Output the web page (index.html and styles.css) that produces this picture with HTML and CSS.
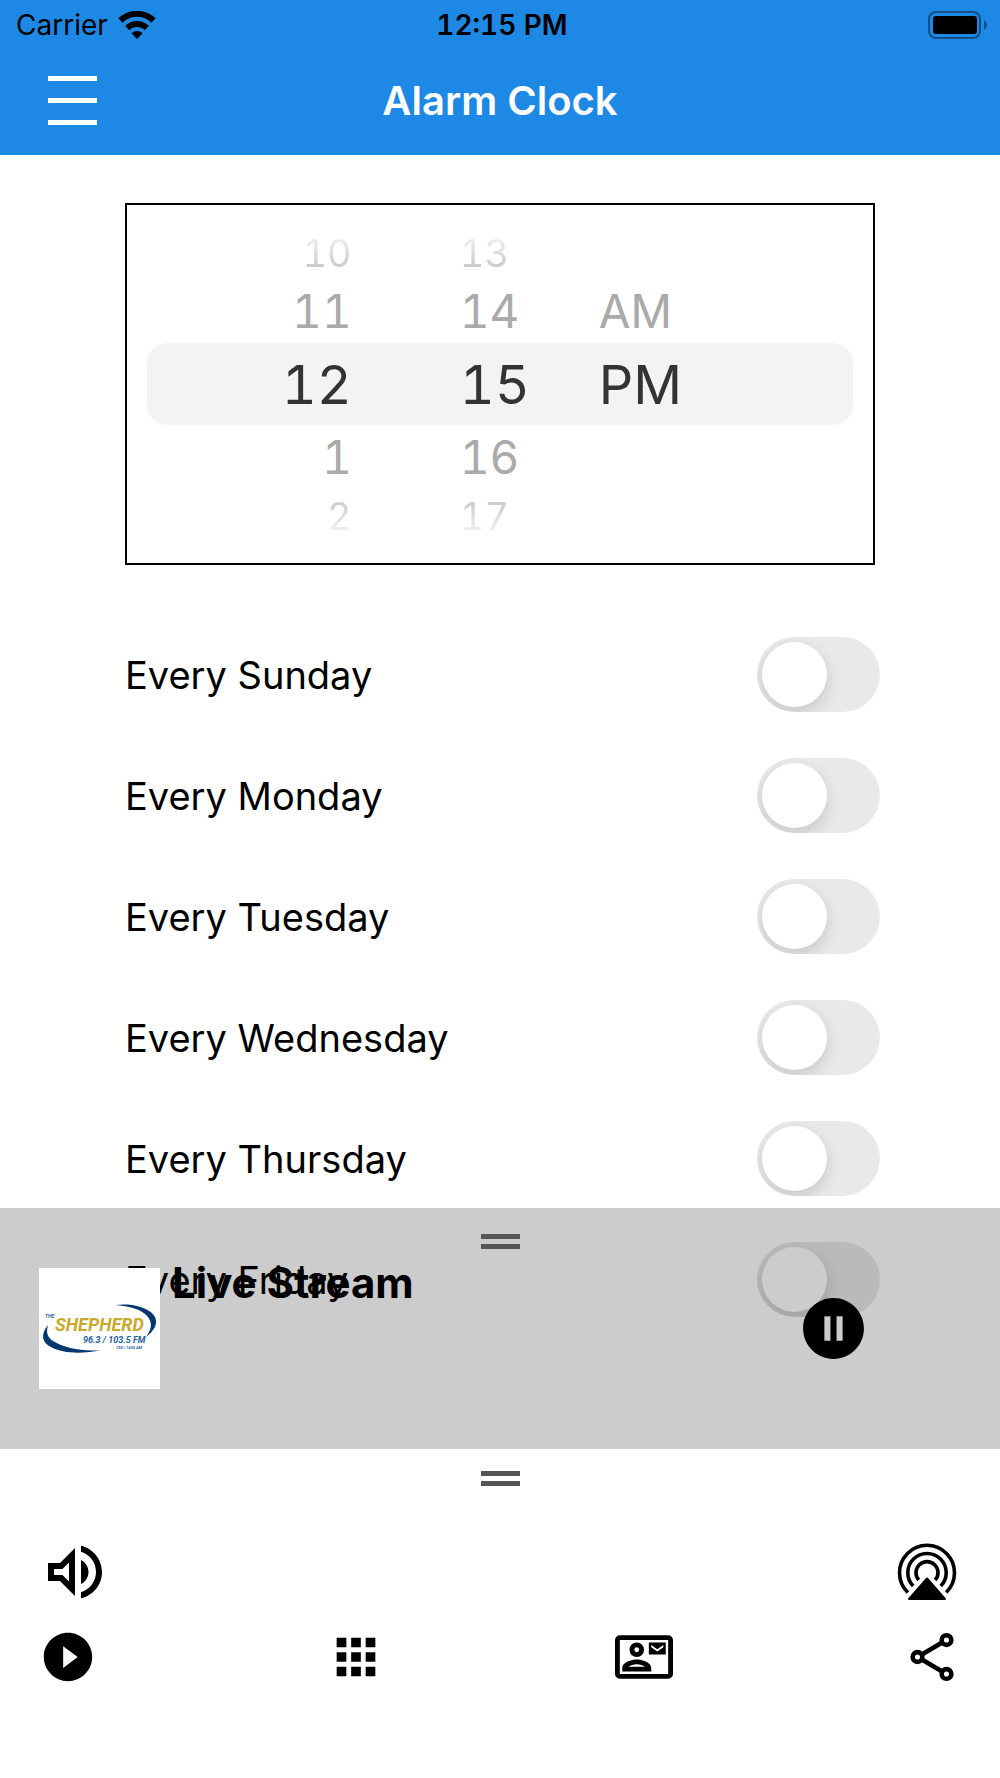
FILE: index.html
```
<!DOCTYPE html>
<html lang="en">
<head>
    <meta charset="UTF-8">
    <meta name="viewport" content="width=device-width, initial-scale=1.0">
    <title>Alarm Clock</title>
    <link rel="stylesheet" href="styles.css">
</head>
<body>
    <header class="header">
        <div class="status-bar">
            <div class="carrier">
                <span>Carrier</span>
                <svg width="38" height="28" viewBox="0 0 38 28">
                    <path d="M19 28l-5.600-5.700a8 8 0 0 1 11.200 0z"/>
                    <path d="M9.200 17a14 14 0 0 1 19.600 0" fill="none" stroke="#000" stroke-width="6"/>
                    <path d="M2.500 9.500a23.500 23.500 0 0 1 33 0" fill="none" stroke="#000" stroke-width="6"/>
                </svg>
            </div>
            <span class="time">12:15 PM</span>
            <svg class="battery" width="60" height="28" viewBox="0 0 60 28">
                <rect x="1" y="1" width="51" height="26" rx="7" fill="none" stroke="#124f86" stroke-width="2"/>
                <rect x="5" y="5" width="44" height="18" rx="3"/>
                <path d="M56 9q6 5 0 10z" fill="#124f86"/>
            </svg>
        </div>
        <div class="nav-bar">
            <button class="menu-btn" aria-label="Menu">
                <span></span><span></span><span></span>
            </button>
            <h1>Alarm Clock</h1>
        </div>
    </header>

    <main>
        <!-- Time wheel -->
        <div class="picker">
            <ul class="wheel hours">
                <li class="far top">10</li>
                <li class="near">11</li>
                <li class="selected">12</li>
                <li class="near">1</li>
                <li class="far bottom">2</li>
            </ul>
            <ul class="wheel minutes">
                <li class="far top">13</li>
                <li class="near">14</li>
                <li class="selected">15</li>
                <li class="near">16</li>
                <li class="far bottom">17</li>
            </ul>
            <ul class="wheel period">
                <li class="far"></li>
                <li class="near">AM</li>
                <li class="selected">PM</li>
                <li class="near"></li>
                <li class="far"></li>
            </ul>
        </div>

        <!-- Repeat days -->
        <div class="days">
            <div class="day">
                <label for="sunday">Every Sunday</label>
                <input type="checkbox" class="switch" id="sunday">
            </div>
            <div class="day">
                <label for="monday">Every Monday</label>
                <input type="checkbox" class="switch" id="monday">
            </div>
            <div class="day">
                <label for="tuesday">Every Tuesday</label>
                <input type="checkbox" class="switch" id="tuesday">
            </div>
            <div class="day">
                <label for="wednesday">Every Wednesday</label>
                <input type="checkbox" class="switch" id="wednesday">
            </div>
            <div class="day">
                <label for="thursday">Every Thursday</label>
                <input type="checkbox" class="switch" id="thursday">
            </div>
            <div class="day">
                <label for="friday">Every Friday</label>
                <input type="checkbox" class="switch" id="friday">
            </div>
        </div>

        <!-- Mini player, floats over the list -->
        <section class="player">
            <div class="handle"></div>
            <div class="player-row">
                <svg class="cover" width="121" height="121" viewBox="0 0 121 121" role="img" aria-label="The Shepherd">
                    <rect width="121" height="121" fill="#fff"/>
                    <path d="M76 37C98 34 119 43 117 55C116 61 112 65 107 69C112 62 114 56 109 49C103 41 90 38 76 37z" fill="#00376c"/>
                    <path d="M9 57C2 66 2 74 12 79C24 86 45 86 62 82C45 84 25 80 14 73C8 69 7 64 9 57z" fill="#00376c"/>
                    <text class="logo-the" x="6" y="50">THE</text>
                    <text class="logo-name" x="16" y="63">SHEPHERD</text>
                    <text class="logo-freq" x="44" y="75">96.3 / 103.5 FM</text>
                    <text class="logo-am" x="77" y="81">750 / 1430 AM</text>
                </svg>
                <h2>Live Stream</h2>
                <button class="icon-btn pause-btn" aria-label="Pause">
                    <svg width="73" height="73" viewBox="0 0 24 24"><path d="M12 2C6.480 2 2 6.480 2 12s4.480 10 10 10 10-4.480 10-10S17.520 2 12 2zm-1 14H9V8h2v8zm4 0h-2V8h2v8z"/></svg>
                </button>
            </div>
        </section>
    </main>

    <footer class="panel">
        <div class="handle"></div>
        <div class="panel-row audio-row">
            <button class="icon-btn" aria-label="Volume">
                <svg width="72" height="72" viewBox="0 0 24 24"><path d="M3 9v6h4l5 5V4L7 9H3zm7-.17v6.340L7.830 13H5v-2h2.830L10 8.830zM16.500 12c0-1.770-1.020-3.290-2.500-4.030v8.050c1.480-.73 2.500-2.250 2.500-4.020zM14 3.230v2.060c2.890.86 5 3.540 5 6.710s-2.110 5.850-5 6.710v2.060c4.010-.91 7-4.490 7-8.770s-2.990-7.860-7-8.770z"/></svg>
            </button>
            <button class="icon-btn" aria-label="AirPlay">
                <svg width="68" height="72" viewBox="0 0 68 72">
                    <g fill="none" stroke="#000" stroke-width="3.600">
                        <path d="M14.800 56.500A27.500 27.500 0 1 1 53.200 56.500"/>
                        <path d="M20.200 50A19.200 19.200 0 1 1 47.800 50"/>
                        <path d="M25.800 44A11 11 0 1 1 42.200 44"/>
                    </g>
                    <path d="M34 42.500L52 63H16z" stroke="#000" stroke-width="2" stroke-linejoin="round"/>
                </svg>
            </button>
        </div>
        <nav class="panel-row tabs">
            <button class="icon-btn" aria-label="Play">
                <svg width="58" height="58" viewBox="0 0 24 24"><path d="M12 2C6.480 2 2 6.480 2 12s4.480 10 10 10 10-4.480 10-10S17.520 2 12 2zm-2 14.500v-9l6 4.500-6 4.500z"/></svg>
            </button>
            <button class="icon-btn" aria-label="Apps">
                <svg width="58" height="58" viewBox="0 0 24 24"><path d="M4 8h4V4H4v4zm6 12h4v-4h-4v4zm-6 0h4v-4H4v4zm0-6h4v-4H4v4zm6 0h4v-4h-4v4zm6-10v4h4V4h-4zm-6 4h4V4h-4v4zm6 6h4v-4h-4v4zm0 6h4v-4h-4v4z"/></svg>
            </button>
            <button class="icon-btn" aria-label="Contact">
                <svg width="58" height="58" viewBox="0 0 24 24">
                    <rect x="1" y="4" width="22" height="16" rx="1" fill="none" stroke="#000" stroke-width="2"/>
                    <circle cx="9" cy="9" r="2" fill="none" stroke="#000" stroke-width="2"/>
                    <path d="M15 18v-1.400c0-2.500-3.970-3.580-6-3.580s-6 1.080-6 3.580V18h12zm-9.400-2c.7-.56 2.200-1 3.400-1s2.700.44 3.400 1z"/>
                    <path d="M21 6h-7v5h7V6zm-1 2l-2.500 1.750L15 8V7l2.500 1.750L20 7v1z"/>
                </svg>
            </button>
            <button class="icon-btn" aria-label="Share">
                <svg width="58" height="58" viewBox="0 0 24 24">
                    <g fill="none" stroke="#000" stroke-width="1.900">
                        <circle cx="18" cy="5" r="2"/>
                        <circle cx="6" cy="12" r="2"/>
                        <circle cx="18" cy="19" r="2"/>
                        <path d="M7.800 11L16.200 6M7.800 13L16.200 18"/>
                    </g>
                </svg>
            </button>
        </nav>
    </footer>
</body>
</html>
```

FILE: styles.css
```
* { box-sizing: border-box; }
body {
    margin: 0;
    height: 100vh;
    display: flex;
    flex-direction: column;
    font-family: Inter, "Liberation Sans", sans-serif;
    background-color: #fff;
    color: #000;
}
h1, h2, ul { margin: 0; padding: 0; }
svg { display: block; }
button { padding: 0; border: none; background: none; cursor: pointer; }

/* Header */
.header { background-color: #1e88e5; }
.status-bar {
    display: grid;
    grid-template-columns: 1fr auto 1fr;
    align-items: center;
    height: 50px;
    padding: 0 12px 0 16px;
    font-size: 28px;
}
.carrier { display: flex; align-items: center; gap: 10px; }
.time { font-weight: 600; font-variant-numeric: tabular-nums; }
.battery { justify-self: end; }
.nav-bar {
    display: grid;
    grid-template-columns: 1fr auto 1fr;
    align-items: center;
    height: 105px;
    padding: 0 48px 4px;
}
.nav-bar h1 { font-size: 40px; font-weight: 600; color: #fff; }
.menu-btn { display: flex; flex-direction: column; gap: 17px; width: 49px; }
.menu-btn span { height: 5px; background-color: #fff; }

/* Content */
main { position: relative; flex: 1; min-height: 0; overflow: hidden; padding-top: 48px; }
.picker {
    display: grid;
    grid-template-columns: 29% 35% 36%;
    width: 75%;
    margin: 0 auto;
    padding: 21px 20px;
    border: 2px solid #000;
    font-variant-numeric: tabular-nums;
}
.wheel { list-style: none; }
.wheel li { display: flex; align-items: center; }
.hours li { justify-content: flex-end; }
.minutes li { padding-left: 108px; }
.wheel .selected { height: 82px; font-size: 54px; color: #333; background-color: #f3f3f3; }
.wheel .near { height: 64px; font-size: 46px; color: #aaa; }
.wheel .far { height: 53px; font-size: 38px; color: transparent; background-clip: text; }
.wheel .top { background-image: linear-gradient(#eee 25%, #ccc 75%); }
.wheel .bottom { background-image: linear-gradient(#ccc 25%, #eee 75%); }
.hours .selected { border-radius: 20px 0 0 20px; }
.period .selected { border-radius: 0 20px 20px 0; }

.days { margin: 49px 12% 0 12.5%; }
.day {
    display: flex;
    align-items: center;
    justify-content: space-between;
    height: 121px;
    font-size: 38px;
}
.switch {
    appearance: none;
    overflow: hidden;
    width: 123px;
    height: 75px;
    margin: 0;
    padding: 5px;
    border-radius: 38px;
    background-color: #e9e9eb;
    cursor: pointer;
}
.switch::before {
    content: "";
    display: block;
    width: 65px;
    height: 65px;
    border-radius: 50%;
    background-color: #fff;
    box-shadow: 0 6px 16px rgba(0, 0, 0, 0.15);
}
.switch:checked { background-color: #34c759; }
.switch:checked::before { margin-left: auto; }

/* Mini player */
.player {
    position: absolute;
    left: 0;
    right: 0;
    bottom: 0;
    height: 241px;
    padding-top: 26px;
    background-color: rgba(0, 0, 0, 0.2);
}
.handle {
    width: 39px;
    height: 15px;
    margin: 0 auto;
    border: solid #555;
    border-width: 5px 0;
}
.player-row { display: flex; align-items: flex-start; padding: 19px 130px 0 39px; }
.player-row h2 { flex: 1; margin-left: 12px; font-size: 42px; line-height: 30px; }
.pause-btn { align-self: center; }
.logo-the, .logo-name, .logo-freq, .logo-am {
    font-family: "Liberation Sans Narrow", Roboto, sans-serif;
    font-style: italic;
    font-weight: bold;
    fill: #1f5f9f;
}
.logo-the { font-size: 5px; }
.logo-name { font-size: 18px; fill: #c9a82a; }
.logo-freq { font-size: 9px; }
.logo-am { font-size: 4px; }

/* Bottom panel */
.panel { padding-top: 22px; padding-bottom: 92px; }
.panel-row { display: flex; align-items: center; justify-content: space-between; padding: 0 39px; }
.audio-row { margin-top: 50px; }
.tabs { margin-top: 20px; }
```
